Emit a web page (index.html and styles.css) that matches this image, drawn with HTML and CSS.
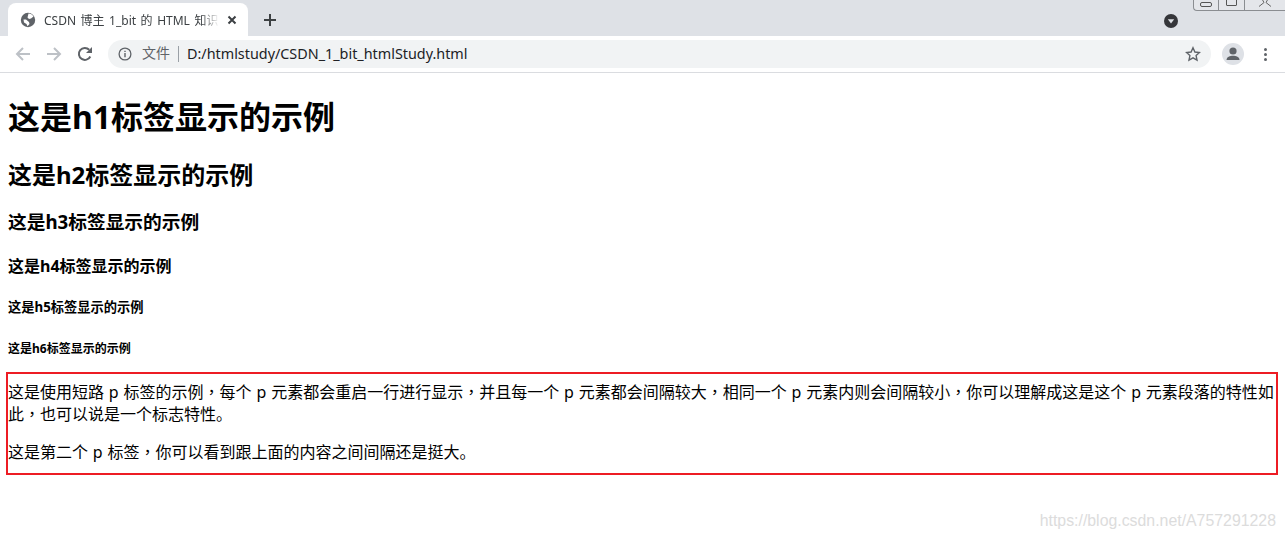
FILE: index.html
```html
<!DOCTYPE html>
<html lang="zh">
<head>
    <meta charset="UTF-8">
    <title>CSDN 博主 1_bit 的 HTML 知识</title>
    <link rel="stylesheet" href="styles.css">
</head>
<body>
    <div class="tabstrip">
        <div class="tab">
            <svg class="favicon" width="16" height="16" viewBox="0 0 16 16">
                <circle cx="8" cy="8" r="7.200" fill="#5f6368"/>
                <path d="M8.500 1.500c2 0 4 1 5 3L11 6.500 9 7 7.500 5.500z" fill="#fff"/>
                <path d="M3.500 7.500L6 7.500l3 2.500.5 2-2 2.200L6.500 12 4 10.500z" fill="#fff"/>
            </svg>
            <span class="tab-title">CSDN 博主 1_bit 的 HTML 知识</span>
            <svg class="tab-close" width="10" height="10" viewBox="0 0 10 10">
                <path d="M1.500 1.500l7 7M8.500 1.500l-7 7" stroke="#3c4043" stroke-width="2"/>
            </svg>
        </div>
        <svg class="new-tab" width="14" height="14" viewBox="0 0 14 14">
            <path d="M7 1v12M1 7h12" stroke="#3c4043" stroke-width="2"/>
        </svg>
        <div class="spacer"></div>
        <div class="media-btn">
            <svg width="14" height="14" viewBox="0 0 14 14">
                <circle cx="7" cy="7" r="7" fill="#35363a"/>
                <path d="M3.800 5.200h6.400L7 9.600z" fill="#dee1e6"/>
            </svg>
        </div>
        <div class="win-controls">
            <div class="win-btn win-min"><span class="min-glyph"></span></div>
            <div class="win-btn win-max"><span class="max-glyph"></span></div>
            <div class="win-btn win-close">
                <svg width="14" height="8" viewBox="0 0 14 8">
                    <path d="M1 7.500l5-4-2-3.500M13 7.500l-5-4 2-3.500" fill="none" stroke="#666" stroke-width="1"/>
                </svg>
            </div>
        </div>
    </div>

    <div class="toolbar">
        <svg class="nav-icon" width="16" height="16" viewBox="0 0 16 16">
            <path d="M15 8H2M8 2L2 8l6 6" fill="none" stroke="#bdc1c6" stroke-width="2"/>
        </svg>
        <svg class="nav-icon" width="16" height="16" viewBox="0 0 16 16">
            <path d="M1 8h13M8 2l6 6-6 6" fill="none" stroke="#bdc1c6" stroke-width="2"/>
        </svg>
        <svg class="nav-icon" width="16" height="16" viewBox="0 0 16 16">
            <path d="M13.300 10.500A6 6 0 1 1 12.200 3.700" fill="none" stroke="#5f6368" stroke-width="2"/>
            <path d="M15 1v6H9z" fill="#5f6368"/>
        </svg>
        <div class="omnibox">
            <svg class="info-icon" width="14" height="14" viewBox="0 0 14 14">
                <circle cx="7" cy="7" r="5.900" fill="none" stroke="#5f6368" stroke-width="1.300"/>
                <path d="M6.300 6h1.400v4.200H6.300zM6.300 3.700h1.400v1.400H6.300z" fill="#5f6368"/>
            </svg>
            <span class="scheme">文件</span>
            <span class="omni-sep"></span>
            <span class="url">D:/htmlstudy/CSDN_1_bit_htmlStudy.html</span>
            <svg class="star" width="16" height="16" viewBox="0 0 16 16">
                <path d="M8 1.800l1.900 4.200 4.600.5-3.400 3.100.9 4.500L8 11.800l-4 2.300.9-4.500-3.400-3.100 4.600-.5z" fill="none" stroke="#5f6368" stroke-width="1.400"/>
            </svg>
        </div>
        <div class="avatar">
            <svg width="22" height="22" viewBox="0 0 22 22">
                <circle cx="11" cy="8" r="3.600" fill="#5f6368"/>
                <path d="M4.500 17c0-3 3.500-4.200 6.500-4.200s6.500 1.200 6.500 4.200z" fill="#5f6368"/>
            </svg>
        </div>
        <div class="menu-dots"><span></span><span></span><span></span></div>
    </div>

    <div class="page">
        <h1>这是h1标签显示的示例</h1>
        <h2>这是h2标签显示的示例</h2>
        <h3>这是h3标签显示的示例</h3>
        <h4>这是h4标签显示的示例</h4>
        <h5>这是h5标签显示的示例</h5>
        <h6>这是h6标签显示的示例</h6>
        <p>这是使用短路 p 标签的示例<span class="comma" lang="zh-TW">，</span>每个 p 元素都会重启一行进行显示<span class="comma" lang="zh-TW">，</span>并且每一个 p 元素都会间隔较大<span class="comma" lang="zh-TW">，</span>相同一个 p 元素内则会间隔较小<span class="comma" lang="zh-TW">，</span>你可以理解成这是这个 p 元素段落的特性如此<span class="comma" lang="zh-TW">，</span>也可以说是一个标志特性。</p>
        <p>这是第二个 p 标签<span class="comma" lang="zh-TW">，</span>你可以看到跟上面的内容之间间隔还是挺大。</p>
    </div>

    <div class="red-box"></div>
    <div class="watermark">https://blog.csdn.net/A757291228</div>
</body>
</html>
```

FILE: styles.css
```css
html, body {
    margin: 0;
    padding: 0;
    height: 539px;
    overflow: hidden;
    background: #fff;
    font-family: "Noto Sans", "Noto Sans CJK SC", sans-serif;
}

/* browser top */
.tabstrip {
    display: flex;
    align-items: flex-end;
    height: 36px;
    background: #dee1e6;
}
.tab {
    display: flex;
    align-items: center;
    width: 240px;
    height: 33px;
    margin-left: 8px;
    background: #fff;
    border-radius: 8px 8px 0 0;
}
.favicon {
    margin-left: 12px;
    flex: none;
}
.tab-title {
    width: 175px;
    margin-left: 8px;
    white-space: nowrap;
    font-size: 12px;
    word-spacing: 1.400px;
    color: #3c4043;
    -webkit-mask-image: linear-gradient(to right, #000 90%, transparent);
    mask-image: linear-gradient(to right, #000 90%, transparent);
}
.tab-close {
    margin-left: 8px;
    flex: none;
}
.new-tab {
    margin: 0 0 9px 15px;
}
.spacer {
    flex: 1;
}
.media-btn {
    display: flex;
    margin: 0 107px 8px 0;
}
.win-controls {
    position: absolute;
    top: -1px;
    right: 0;
    display: flex;
    height: 11px;
    background: #e4e6ea;
    border: 1px solid #8a8d91;
    border-top: 0;
    border-right: 0;
    border-radius: 0 0 0 4px;
}
.win-btn {
    height: 11px;
    display: flex;
    justify-content: center;
    overflow: hidden;
}
.win-min { width: 24px; border-right: 1px solid #8a8d91; }
.win-max { width: 25px; border-right: 1px solid #8a8d91; }
.win-close { width: 40px; }
.min-glyph {
    width: 10px;
    height: 3px;
    margin-top: 3px;
    border: 1px solid #555;
    border-radius: 2px;
}
.max-glyph {
    width: 9px;
    height: 6px;
    margin-top: -1px;
    border: 1px solid #555;
    border-radius: 1px;
}

.toolbar {
    display: flex;
    align-items: center;
    height: 36px;
    border-bottom: 1px solid #dadce0;
    background: #fff;
}
.nav-icon {
    flex: none;
    margin-left: 15px;
}
.omnibox {
    display: flex;
    align-items: center;
    width: 1103px;
    height: 28px;
    margin-left: 15px;
    background: #f1f3f4;
    border-radius: 14px;
}
.info-icon {
    margin-left: 10px;
    flex: none;
}
.scheme {
    margin-left: 10px;
    font-size: 14px;
    line-height: 16px;
    margin-bottom: 2px;
    color: #5f6368;
}
.omni-sep {
    width: 1px;
    height: 16px;
    margin: 0 8px 0 8px;
    background: #9aa0a6;
}
.url {
    flex: 1;
    font-size: 14.360px;
    line-height: 18px;
    color: #202124;
}
.star {
    margin-right: 10px;
}
.avatar {
    display: flex;
    align-items: center;
    justify-content: center;
    width: 22px;
    height: 22px;
    margin-left: 11px;
    background: #dee1e6;
    border-radius: 50%;
}
.menu-dots {
    display: flex;
    flex-direction: column;
    gap: 2px;
    margin-left: 20px;
}
.menu-dots span {
    width: 3px;
    height: 3px;
    background: #5f6368;
    border-radius: 50%;
}

/* page content */
.page {
    padding: 8px;
    color: #000;
}
h1, h2, h3, h4, h5, h6, p {
    margin: 0;
}
h1 {
    font-size: 32px;
    line-height: 37px;
    margin-top: 17px;
}
h2 {
    font-size: 24px;
    line-height: 28px;
    margin-top: 26px;
}
h3 {
    font-size: 18.72px;
    line-height: 22px;
    margin-top: 22px;
}
h4 {
    font-size: 16px;
    line-height: 18px;
    margin-top: 24px;
}
h5 {
    font-size: 13.28px;
    line-height: 16px;
    margin-top: 24px;
}
h6 {
    font-size: 12px;
    line-height: 14px;
    margin-top: 27px;
}
p {
    font-size: 16px;
    line-height: 21px;
    margin-top: 16px;
    word-spacing: .7px;
}
.page h6 + p {
    margin-top: 25px;
}
.comma {
    font-family: "Noto Sans CJK TC", sans-serif;
}

/* annotation on top of the screenshot */
.red-box {
    position: absolute;
    left: 6px;
    top: 372px;
    width: 1268px;
    height: 99px;
    border: 2px solid #ed1c24;
}
.watermark {
    position: absolute;
    right: 9px;
    top: 512px;
    font-family: "Liberation Sans", sans-serif;
    font-size: 15.87px;
    color: #dcdcdc;
}
```
